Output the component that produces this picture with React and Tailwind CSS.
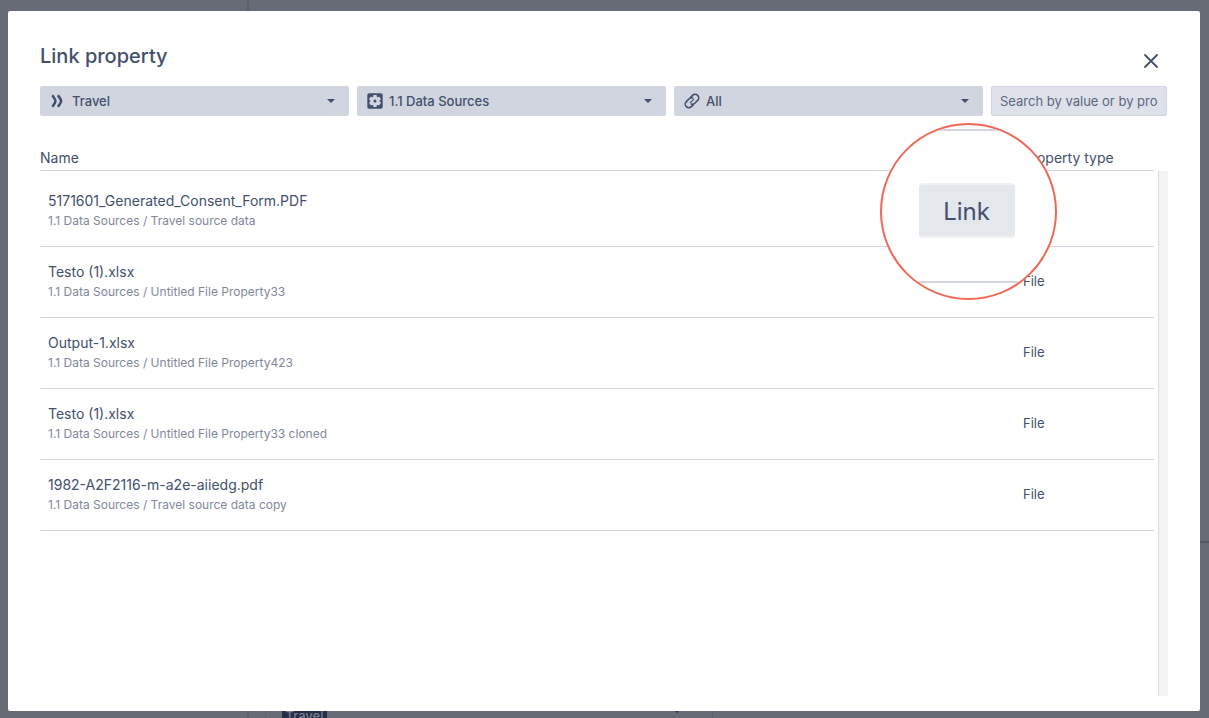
import React from 'react';

const files = [
  { name: '5171601_Generated_Consent_Form.PDF', path: '1.1 Data Sources / Travel source data', type: 'File' },
  { name: 'Testo (1).xlsx', path: '1.1 Data Sources / Untitled File Property33', type: 'File' },
  { name: 'Output-1.xlsx', path: '1.1 Data Sources / Untitled File Property423', type: 'File' },
  { name: 'Testo (1).xlsx', path: '1.1 Data Sources / Untitled File Property33 cloned', type: 'File' },
  { name: '1982-A2F2116-m-a2e-aiiedg.pdf', path: '1.1 Data Sources / Travel source data copy', type: 'File' },
];

function ChevronsIcon() {
  return (
    <svg viewBox="0 0 16 16" className="size-4" fill="none" stroke="currentColor" strokeWidth="2.5" aria-hidden="true">
      <path d="M2.3 2.2 C3.2 3.4 5.4 6.2 5.4 8 C5.4 9.8 3.2 12.6 2.3 13.8" />
      <path d="M7.9 2.2 C8.8 3.4 11.1 6.2 11.1 8 C11.1 9.8 8.8 12.6 7.9 13.8" />
    </svg>
  );
}

function GearBoxIcon() {
  return (
    <svg viewBox="0 0 16 16" className="size-4" aria-hidden="true">
      <rect x="0.3" y="0.3" width="15.4" height="15.4" rx="1.8" fill="currentColor" />
      <g fill="#d1d5e0">
        <circle cx="8" cy="8" r="4.6" />
        <rect x="6.2" y="2" width="3.6" height="12" rx="0.8" />
        <rect x="6.2" y="2" width="3.6" height="12" rx="0.8" transform="rotate(60 8 8)" />
        <rect x="6.2" y="2" width="3.6" height="12" rx="0.8" transform="rotate(120 8 8)" />
      </g>
      <circle cx="8" cy="8" r="1.5" fill="currentColor" />
    </svg>
  );
}

function LinkIcon() {
  return (
    <svg viewBox="0 0 16 16" className="size-4" aria-hidden="true">
      <g transform="rotate(-45 8 8)" fill="none" stroke="currentColor" strokeWidth="1.6" strokeLinecap="round">
        <path d="M6.4 11.6 H3.6 A3.6 3.6 0 0 1 3.6 4.4 H7.6 A3.6 3.6 0 0 1 10.6 6.4" />
        <path d="M9.6 4.4 H12.4 A3.6 3.6 0 0 1 12.4 11.6 H8.4 A3.6 3.6 0 0 1 5.4 9.6" />
        <path d="M5.6 8 H10.4" strokeWidth="1.2" />
      </g>
    </svg>
  );
}

function FilterSelect({ id, label, value, icon }) {
  return (
    <div className="relative min-w-0 flex-1 text-[#42506d]">
      <label htmlFor={id} className="sr-only">{label}</label>
      <select
        id={id}
        defaultValue={value}
        className="block h-[30px] w-full appearance-none rounded-xs bg-[#d1d5e0] pr-8 pl-8 text-[13px] leading-[30px] font-medium outline-none"
      >
        <option>{value}</option>
      </select>
      <span className="pointer-events-none absolute inset-y-0 left-2.5 flex items-center">{icon}</span>
      <span className="pointer-events-none absolute inset-y-0 right-3.5 flex items-center">
        <svg viewBox="0 0 8 4" className="h-1 w-2" fill="currentColor" aria-hidden="true">
          <path d="M0 0h8L4 4z" />
        </svg>
      </span>
    </div>
  );
}

function PageBehind() {
  return (
    <div className="absolute inset-0 overflow-hidden" aria-hidden="true">
      <div className="absolute inset-y-0 left-0 w-[249px] border-r-2 border-[#5c6170]" />
      <div className="absolute top-[541px] right-0 h-[2px] w-3 bg-[#525766]" />
      <div className="absolute bottom-0 left-[265px] h-2 w-[448px] border-x border-[#5a6375]" />
      <div className="absolute -bottom-2 left-[282px] h-5 w-[45px] bg-[#252e48] text-center text-[13px] leading-5 font-medium text-[#767d8d]">
        Travel
      </div>
      <svg viewBox="0 0 8 4" className="absolute bottom-[5px] left-[673px] h-1 w-2" fill="#2f394f">
        <path d="M0 0h8L4 4z" />
      </svg>
    </div>
  );
}

function Magnifier() {
  return (
    <div className="absolute -top-[23px] right-[111px] flex size-[177px] flex-col items-center justify-between overflow-hidden rounded-full border-2 border-[#ee6a57] bg-white">
      <div className="mt-1 h-0.5 w-full bg-[#d1d5e0]" />
      <button
        type="button"
        className="mt-2 mr-1 h-[55px] w-24 rounded-sm border-y-2 border-[#eff1f3] bg-[#e4e7eb] pt-1 text-2xl text-[#42506d]"
      >
        Link
      </button>
      <div className="mb-[15px] h-0.5 w-full bg-[#d1d5e0]" />
    </div>
  );
}

export default function App() {
  return (
    <div className="relative flex h-screen min-h-[560px] bg-[#676b76] pt-[11px] pr-[9px] pb-[7px] pl-2 font-['Inter','Liberation_Sans',sans-serif] text-[#42506d]">
      <PageBehind />
      <main
        role="dialog"
        aria-labelledby="dialog-title"
        className="relative flex min-w-0 flex-1 flex-col rounded-xs bg-white px-8 pt-[30px] pb-[15px]"
      >
        <header className="flex items-end justify-between">
          <h1 id="dialog-title" className="text-xl leading-[30px] font-medium">Link property</h1>
          <button type="button" aria-label="Close" className="flex h-5 w-[34px] items-center justify-center">
            <svg viewBox="0 0 14 14" className="size-3.5" fill="none" stroke="currentColor" strokeWidth="1.8" strokeLinecap="round" aria-hidden="true">
              <path d="M1 1l12 12M13 1L1 13" />
            </svg>
          </button>
        </header>

        <div className="mt-[15px] flex gap-2 pr-px">
          <FilterSelect id="workflow" label="Workflow" value="Travel" icon={<ChevronsIcon />} />
          <FilterSelect id="source" label="Source" value="1.1 Data Sources" icon={<GearBoxIcon />} />
          <FilterSelect id="kind" label="Link type" value="All" icon={<LinkIcon />} />
          <input
            type="text"
            aria-label="Search by value or by property"
            placeholder="Search by value or by property"
            className="h-[30px] w-44 rounded-xs border border-[#d1d5e0] bg-[#dfe1ea] px-2 text-[13px] outline-none placeholder:text-[#5b6780]"
          />
        </div>

        <section className="relative mt-[30px] flex min-h-0 flex-1 gap-1">
          <div className="min-w-0 flex-1">
            <table className="w-full border-separate border-spacing-0 text-left">
              <thead>
                <tr className="text-sm">
                  <th scope="col" className="h-[25px] border-b border-[#d1d5e0] font-normal">Name</th>
                  <th scope="col" className="h-[25px] w-[131px] border-b border-[#d1d5e0] font-normal">Property type</th>
                </tr>
              </thead>
              <tbody>
                {files.map((file, i) => (
                  <tr key={i} className="group">
                    <td className="border-b border-[#d1d5e0] px-2 pt-4 pb-3.5 group-first:pt-[21px]">
                      <div className="text-sm leading-[18px]">{file.name}</div>
                      <div className="text-xs leading-[22px] text-[#7f889c]">{file.path}</div>
                    </td>
                    <td className="border-b border-[#d1d5e0] text-[13px]">{file.type}</td>
                  </tr>
                ))}
              </tbody>
            </table>
          </div>
          <div className="mt-[25px] w-2.5 border-l border-[#dcdcdc] bg-[#f3f3f3]" />
          <Magnifier />
        </section>
      </main>
    </div>
  );
}
